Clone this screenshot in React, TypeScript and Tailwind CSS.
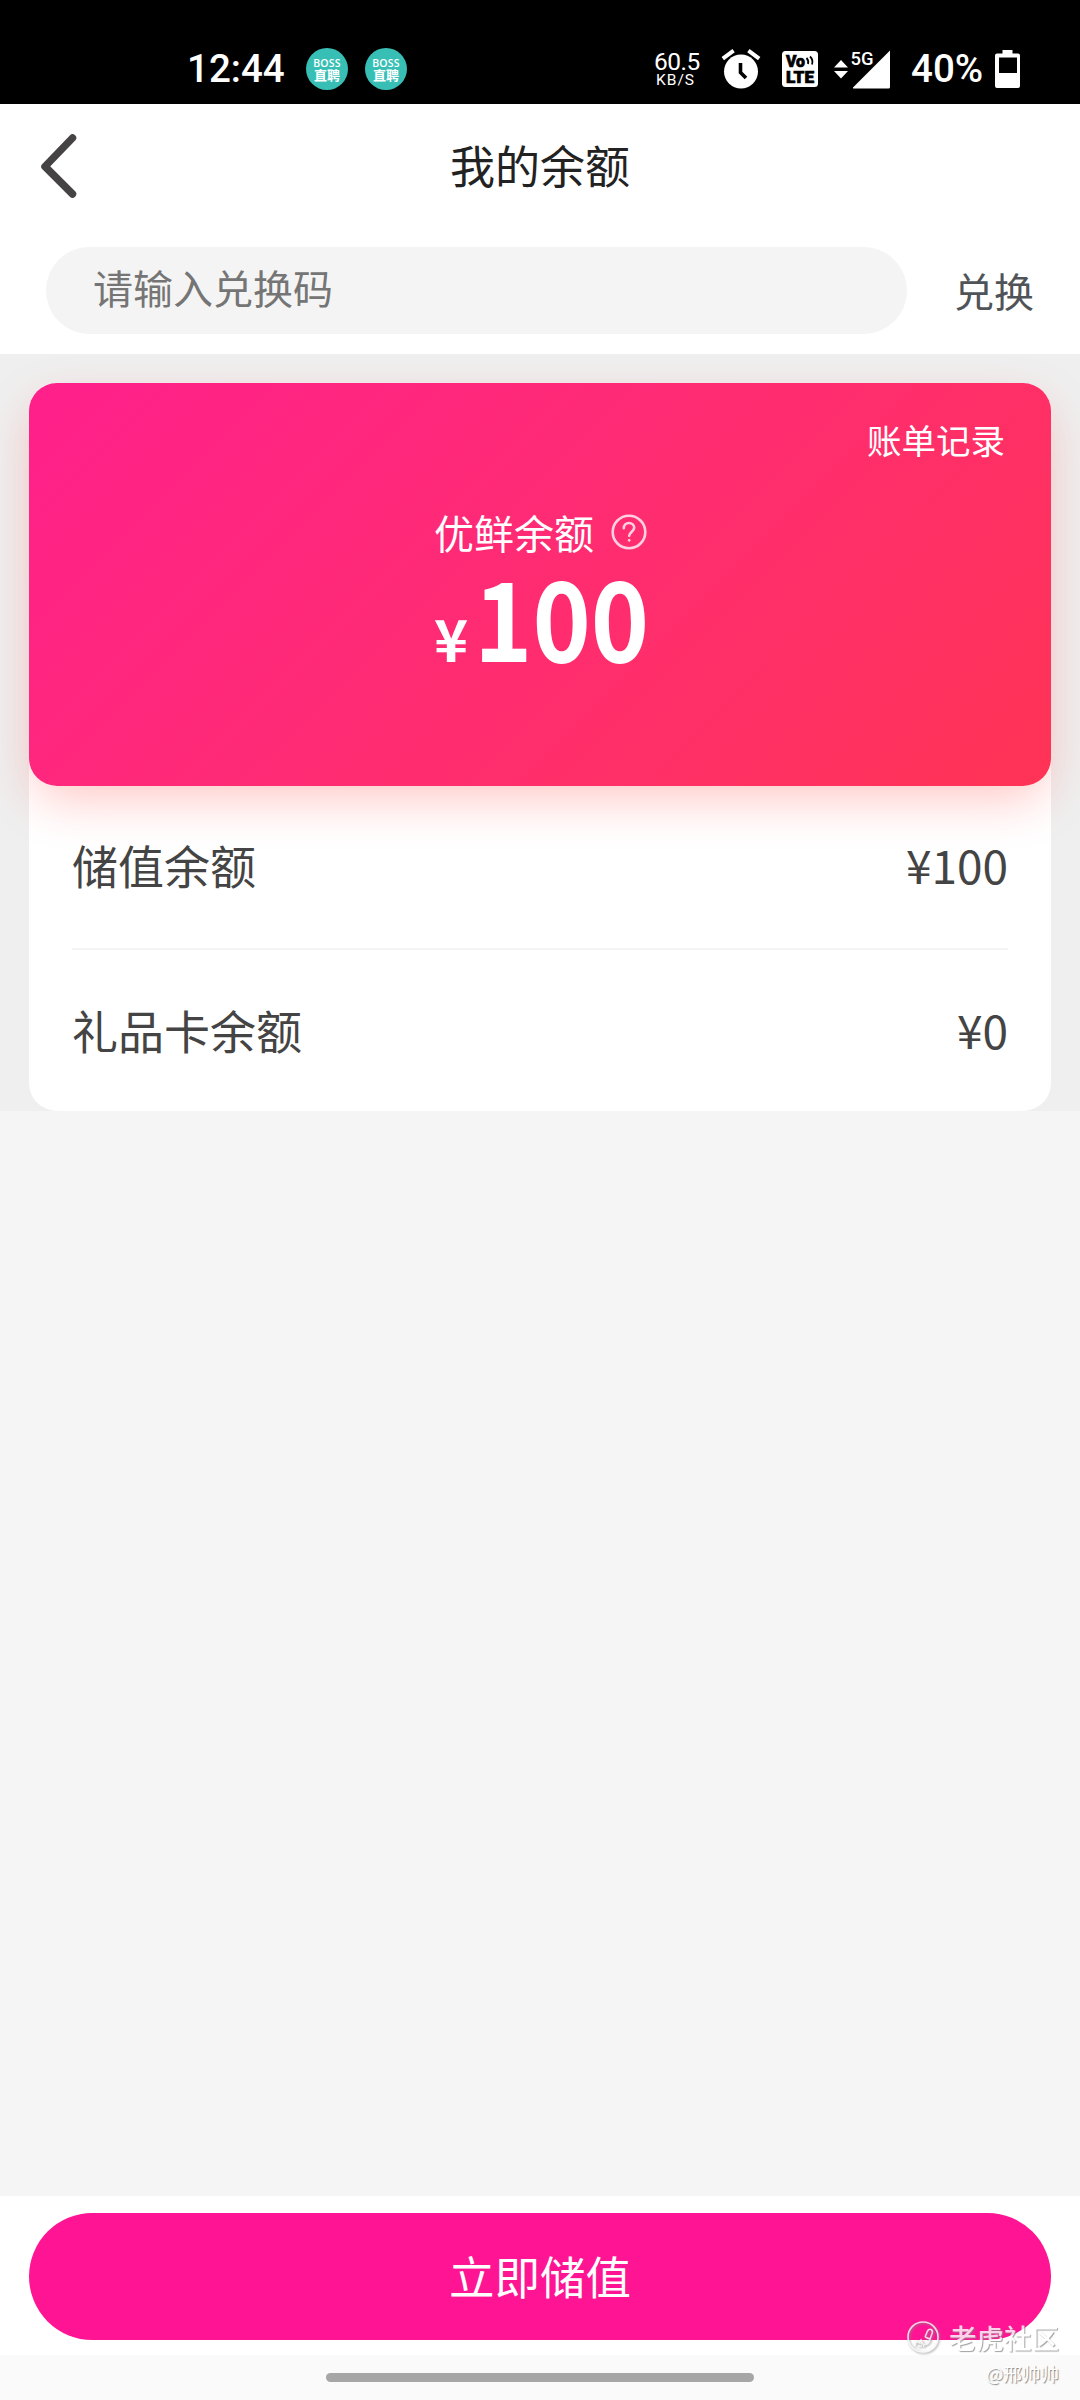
import { ReactNode } from "react";

function BossBadge() {
  return (
    <div className="flex h-[42px] w-[42px] flex-col items-center justify-center rounded-full bg-[#38bfb5] pt-px leading-none text-white">
      <span className="font-['Open_Sans'] text-[10.500px] leading-[10px] font-semibold tracking-[0.2px]">
        BOSS
      </span>
      <span className="text-[13px] leading-[14px] font-bold">直聘</span>
    </div>
  );
}

function AlarmIcon() {
  return (
    <svg className="h-10 w-10" viewBox="0 0 40 40" fill="none">
      <circle cx="20" cy="22.5" r="17" fill="#fff" />
      <path d="M1.8 9.6L12.6 1.6M38.2 9.6L27.4 1.6" stroke="#fff" strokeWidth="4" />
      <path d="M19.5 14v9.500l5.500 5.500" stroke="#000" strokeWidth="3.600" />
    </svg>
  );
}

function VolteIcon() {
  return (
    <svg className="h-9 w-9 overflow-visible" viewBox="0 0 36 36">
      <rect width="36" height="36" rx="3.500" fill="#fff" />
      <g fontFamily="Roboto" fontWeight="900" fontSize="16" stroke="#000" strokeWidth="0.700">
        <text x="4" y="16" textLength="19" lengthAdjust="spacingAndGlyphs">
          Vo
        </text>
        <text x="4" y="31.500" textLength="28" lengthAdjust="spacingAndGlyphs">
          LTE
        </text>
      </g>
      <path d="M24.500 7q2.500 2.500 1.500 6M28 5.500q3.500 3.500 2 8" fill="none" stroke="#000" strokeWidth="1.800" />
    </svg>
  );
}

function SignalIcon() {
  return (
    <svg className="h-10 w-14 overflow-visible" viewBox="0 0 56 40" fill="#fff">
      <path d="M7 11L14 18.500H0zM7 29.500L14 22H0z" />
      <path d="M56 1.500V38q0 1.500-1.500 1.500H19.500q-1 0-.5-1z" />
      <text x="16.500" y="16" fontFamily="Roboto" fontWeight="500" fontSize="19" textLength="23" lengthAdjust="spacingAndGlyphs">
        5G
      </text>
    </svg>
  );
}

function BatteryIcon() {
  return (
    <svg className="h-[38px] w-[25px]" viewBox="0 0 25 38">
      <path
        fill="#fff"
        fillRule="evenodd"
        d="M7.500 0h10v3.500H23q2 0 2 2V36q0 2-2 2H2q-2 0-2-2V5.500q0-2 2-2h5.500zM4 7.500V23h18V7.500z"
      />
    </svg>
  );
}

function StatusBar() {
  return (
    <div className="flex h-[104px] items-center bg-black pt-[34px] pr-[60px] pl-[187px] font-['Roboto'] text-white">
      <span className="w-[99px] pt-px text-[38.500px] leading-none font-medium">
        12:44
      </span>
      <div className="ml-5 flex gap-[17px] font-['Noto_Sans_CJK_SC',sans-serif]">
        <BossBadge />
        <BossBadge />
      </div>
      <div className="ml-auto flex items-center">
        <div className="flex w-[46px] flex-col">
          <span className="text-[24.500px] leading-[22px] tracking-[-0.5px]">60.5</span>
          <span className="pl-0.5 text-[15.500px] leading-[15px] tracking-[1px]">
            KB/S
          </span>
        </div>
        <div className="ml-[21px]">
          <AlarmIcon />
        </div>
        <div className="ml-[21px]">
          <VolteIcon />
        </div>
        <div className="ml-4">
          <SignalIcon />
        </div>
        <span className="ml-[21px] w-[72px] pt-px text-[38.500px] leading-none font-medium">
          40%
        </span>
        <div className="ml-3">
          <BatteryIcon />
        </div>
      </div>
    </div>
  );
}

function HelpIcon() {
  return (
    <svg
      className="mb-px h-9 w-9"
      viewBox="0 0 36 36"
      fill="none"
      stroke="#ffd0e2"
      strokeWidth="2.600"
    >
      <circle cx="18" cy="18" r="16.300" />
      <path
        strokeLinecap="round"
        d="M12.800 14.200C12.800 10.800 15 9 18 9s5.200 2 5.200 4.800c0 3.600-5 4.200-5 8"
      />
      <circle cx="18.200" cy="26.300" r="1" fill="#ffd0e2" strokeWidth="1" />
    </svg>
  );
}

function BalanceRow({ label, children }: { label: string; children: ReactNode }) {
  return (
    <div className="flex h-[164px] items-center justify-between pb-[5px] text-[46px] text-[#444]">
      <span>{label}</span>
      <span>{children}</span>
    </div>
  );
}

function Watermark() {
  return (
    <div className="absolute right-[21px] bottom-[13px] flex flex-col items-end text-white [text-shadow:1px_1px_1px_#888]">
      <div className="flex items-center gap-2.5 pb-0.5">
        <svg
          className="h-8 w-8 drop-shadow-[1px_1px_1px_#888]"
          viewBox="0 0 32 32"
          fill="none"
          stroke="#fff"
          strokeOpacity="0.800"
          strokeWidth="1.600"
        >
          <circle cx="16" cy="16" r="15" />
          <path d="M18 16l2.500-6q1.500-2.500 3.500-1.500t1.200 3.500L23 18M18 16l5 2q-1 5-5 5.500-3 0-5-2M8 25l1-5 3 2 2-3 2 4 1 3M11 25h4" />
        </svg>
        <span className="text-[27.500px] leading-9 font-medium opacity-80">
          老虎社区
        </span>
      </div>
      <span className="mt-0.5 text-[18.500px] leading-[28px]">@邢帅帅</span>
    </div>
  );
}

export default function App() {
  return (
    <div className="relative flex h-[2400px] w-[1080px] flex-col overflow-hidden bg-[#f5f5f5] font-['Noto_Sans_CJK_SC',sans-serif]">
      <StatusBar />

      {/* Title and redeem code */}
      <header className="h-[250px] bg-white">
        <div className="grid h-[143px] grid-cols-[1fr_auto_1fr] items-center pb-5">
          <svg
            className="ml-[38px] h-[68px] w-[42px]"
            viewBox="0 0 42 68"
            fill="none"
            stroke="#454344"
            strokeWidth="7.500"
            strokeLinecap="round"
            strokeLinejoin="round"
          >
            <path d="M34.500 6L7 34.500 34.500 62" />
          </svg>
          <h1 className="pb-[3px] text-[45px] leading-none text-[#222]">
            我的余额
          </h1>
        </div>
        <div className="flex items-center pr-[46px] pl-[46px]">
          <input
            className="h-[87px] w-[861px] rounded-full bg-[#f4f4f4] px-[47px] pb-[7px] text-[40px] placeholder:text-[#757575]"
            placeholder="请输入兑换码"
          />
          <button className="ml-auto pb-0.5 text-[40px] leading-none text-[#505458]">
            兑换
          </button>
        </div>
      </header>

      <main className="h-[757px] bg-[#efefef] px-[29px] pt-[29px]">
        <div className="h-[728px] rounded-[28px] bg-white">
          <section className="flex h-[403px] flex-col rounded-[28px] bg-linear-135 from-[#ff1f8b] to-[#ff3355] text-white shadow-[0_18px_50px_-6px_rgba(255,50,40,0.280)]">
            <a className="mt-9 mr-[46px] self-end text-[34.500px] leading-10">
              账单记录
            </a>
            <div className="mt-[51px] ml-[405px] flex items-center gap-[17px]">
              <span className="text-[40px] leading-[44px]">优鲜余额</span>
              <HelpIcon />
            </div>
            <div className="ml-[405px] flex items-baseline leading-[120px] font-bold">
              <span className="text-[58px]">¥</span>
              <span className="ml-1.5 origin-left scale-x-90 text-[110px]">
                100
              </span>
            </div>
          </section>
          <div className="divide-y-2 divide-[#f4f4f4] px-[43px]">
            <BalanceRow label="储值余额">¥100</BalanceRow>
            <BalanceRow label="礼品卡余额">¥0</BalanceRow>
          </div>
        </div>
      </main>

      {/* Bottom action */}
      <footer className="mt-auto h-[159px] bg-white px-[29px] pt-[17px]">
        <button className="h-[127px] w-full rounded-full bg-[#ff1493] pb-0.5 text-[45.500px] text-white">
          立即储值
        </button>
      </footer>
      <div className="flex h-[45px] justify-center bg-[#fafafa] pt-[18px]">
        <div className="h-[9px] w-[428px] rounded-full bg-[#a6a6a6]" />
      </div>

      <Watermark />
    </div>
  );
}
